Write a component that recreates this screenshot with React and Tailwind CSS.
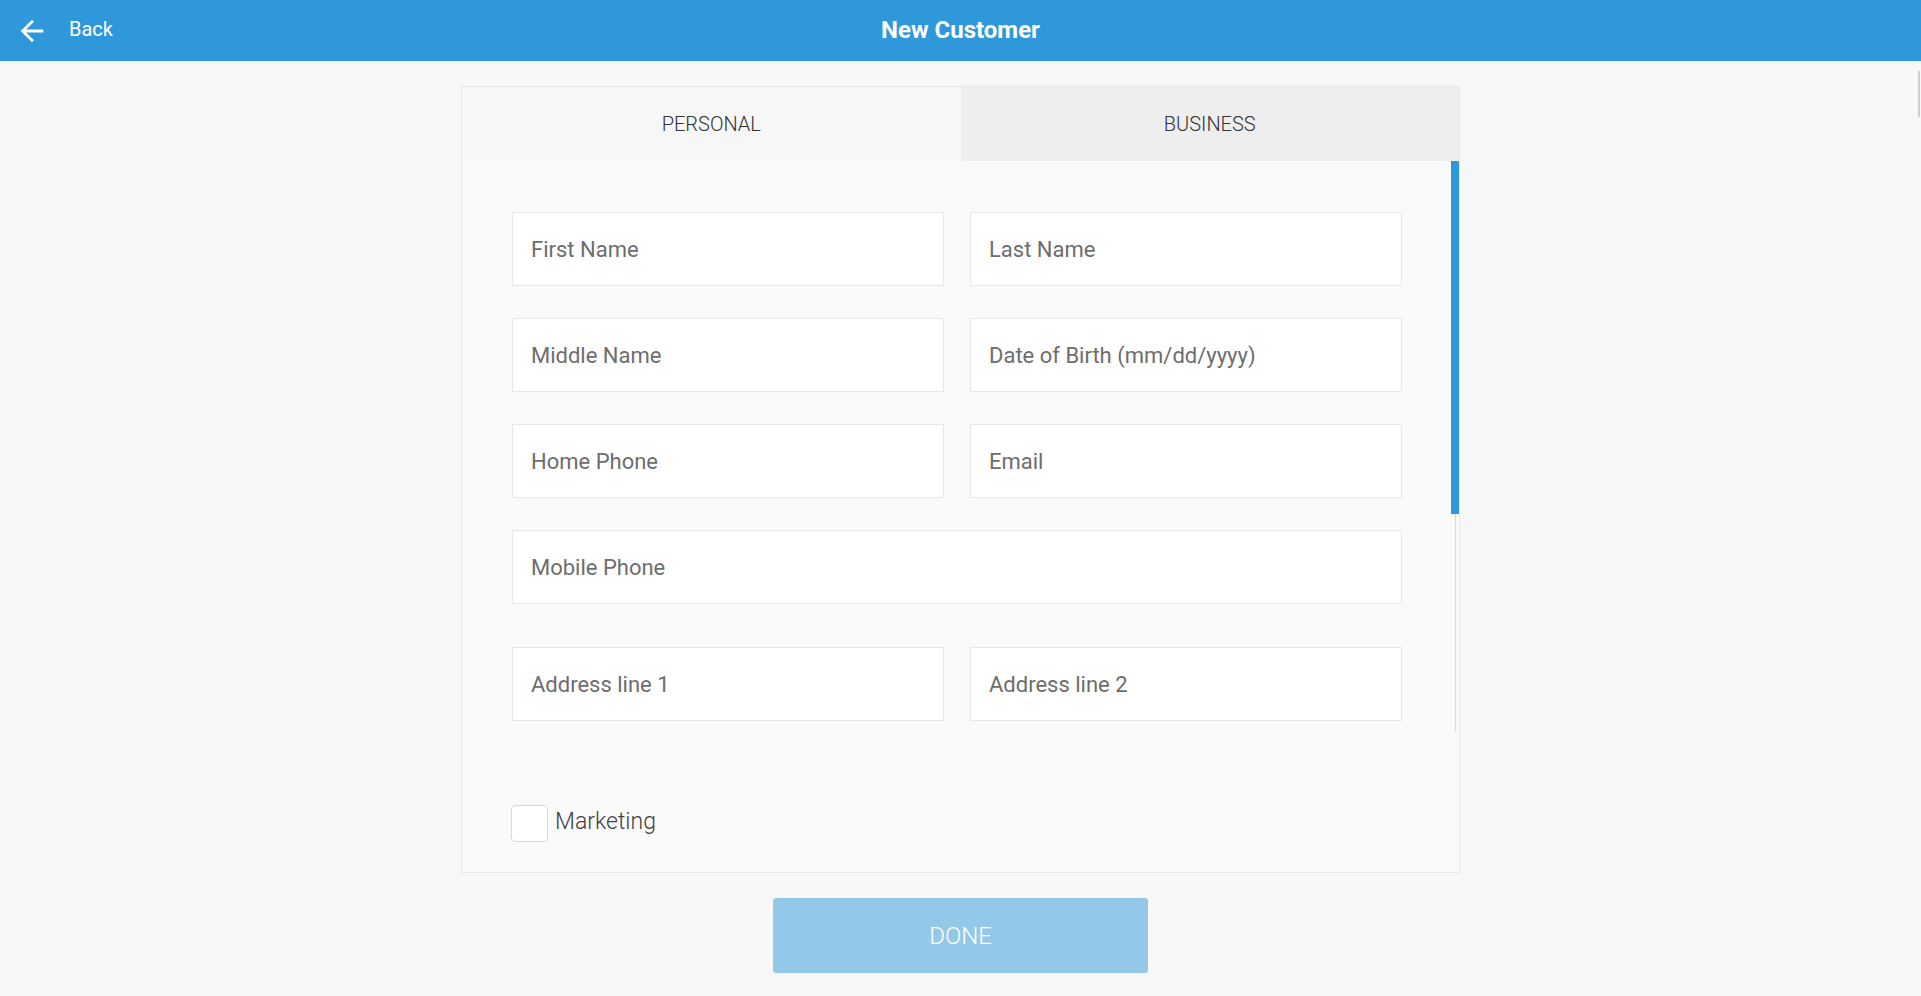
import { useState } from "react";

function Field({ placeholder, full }) {
  return (
    <input
      type="text"
      placeholder={placeholder}
      className={
        (full ? "col-span-2 " : "") +
        "h-[74px] w-full border border-[#e8e8e8] bg-white px-[18px] text-[22px] text-[#555] outline-none placeholder:text-[#6d6d6d]"
      }
    />
  );
}

export default function App() {
  const [tab, setTab] = useState("personal");
  const [marketing, setMarketing] = useState(false);

  return (
    <div className="relative min-h-[996px] bg-[#f7f7f7] font-['Roboto',sans-serif]">
      {/* Header */}
      <header className="grid h-[61px] grid-cols-[1fr_auto_1fr] items-center bg-[#2f98db] text-white">
        <button className="flex items-center gap-[20px] pl-[15px] text-[20px]">
          <svg width="34" height="34" viewBox="0 0 24 24" fill="currentColor">
            <path d="M20 11H7.83l5.59-5.59L12 4l-8 8 8 8 1.41-1.41L7.83 13H20v-2z" />
          </svg>
          <span className="-mt-[3px]">Back</span>
        </button>
        <h1 className="-mt-[2px] text-[24px] font-bold">New Customer</h1>
        <div />
      </header>

      {/* page scrollbar thumb */}
      <div className="absolute right-[1px] top-[71px] h-[46px] w-[2px] bg-[#cfcfcf]" />

      <main className="flex flex-col items-center pt-[25px]">
        <div className="w-[999px] border border-[#e8e8e8] bg-[#fafafa]">
          {/* Tabs */}
          <div className="grid h-[74px] grid-cols-2 text-[20px] font-light text-[#333]">
            <button
              onClick={() => setTab("personal")}
              className={tab === "personal" ? "bg-[#f7f7f7]" : "bg-[#eeeeee]"}
            >
              PERSONAL
            </button>
            <button
              onClick={() => setTab("business")}
              className={tab === "business" ? "bg-[#f7f7f7]" : "bg-[#eeeeee]"}
            >
              BUSINESS
            </button>
          </div>

          {/* Scrolling form */}
          <div className="flex h-[570px]">
            <div className="flex-1 overflow-hidden pl-[50px] pr-[49px] pt-[51px]">
              <div className="grid grid-cols-2 gap-x-[26px] gap-y-[32px]">
                <Field placeholder="First Name" />
                <Field placeholder="Last Name" />
                <Field placeholder="Middle Name" />
                <Field placeholder="Date of Birth (mm/dd/yyyy)" />
                <Field placeholder="Home Phone" />
                <Field placeholder="Email" />
                <Field placeholder="Mobile Phone" full />
              </div>
              <div className="mt-[43px] grid grid-cols-2 gap-x-[26px] gap-y-[32px]">
                <Field placeholder="Address line 1" />
                <Field placeholder="Address line 2" />
                <Field placeholder="City" />
                <Field placeholder="State" />
                <Field placeholder="Zip Code" />
                <Field placeholder="Country" />
              </div>
            </div>
            <div className="flex w-[8px] flex-col items-center">
              <div className="h-[353px] w-[8px] bg-[#2f98db]" />
              <div className="w-px flex-1 bg-[#c4def0]" />
            </div>
          </div>

          {/* Marketing */}
          <div className="pb-[30px] pl-[49px] pt-[74px]">
            <label className="flex items-center gap-[7px] text-[23px] font-light text-[#3f3f3f]">
              <button
                onClick={() => setMarketing(!marketing)}
                className="h-[37px] w-[37px] rounded-[4px] border border-[#d8d8d8] bg-white"
              >
                {marketing && (
                  <svg viewBox="0 0 24 24" className="m-auto h-[26px] w-[26px]" fill="none" stroke="#2f98db" strokeWidth="3">
                    <path d="M5 12l5 5 9-10" />
                  </svg>
                )}
              </button>
              <span className="-mt-[2px]">Marketing</span>
            </label>
          </div>
        </div>

        <button className="mt-[25px] h-[75px] w-[375px] rounded-[3px] bg-[#94c8e9] text-[24px] font-light text-white">
          DONE
        </button>
      </main>
    </div>
  );
}
